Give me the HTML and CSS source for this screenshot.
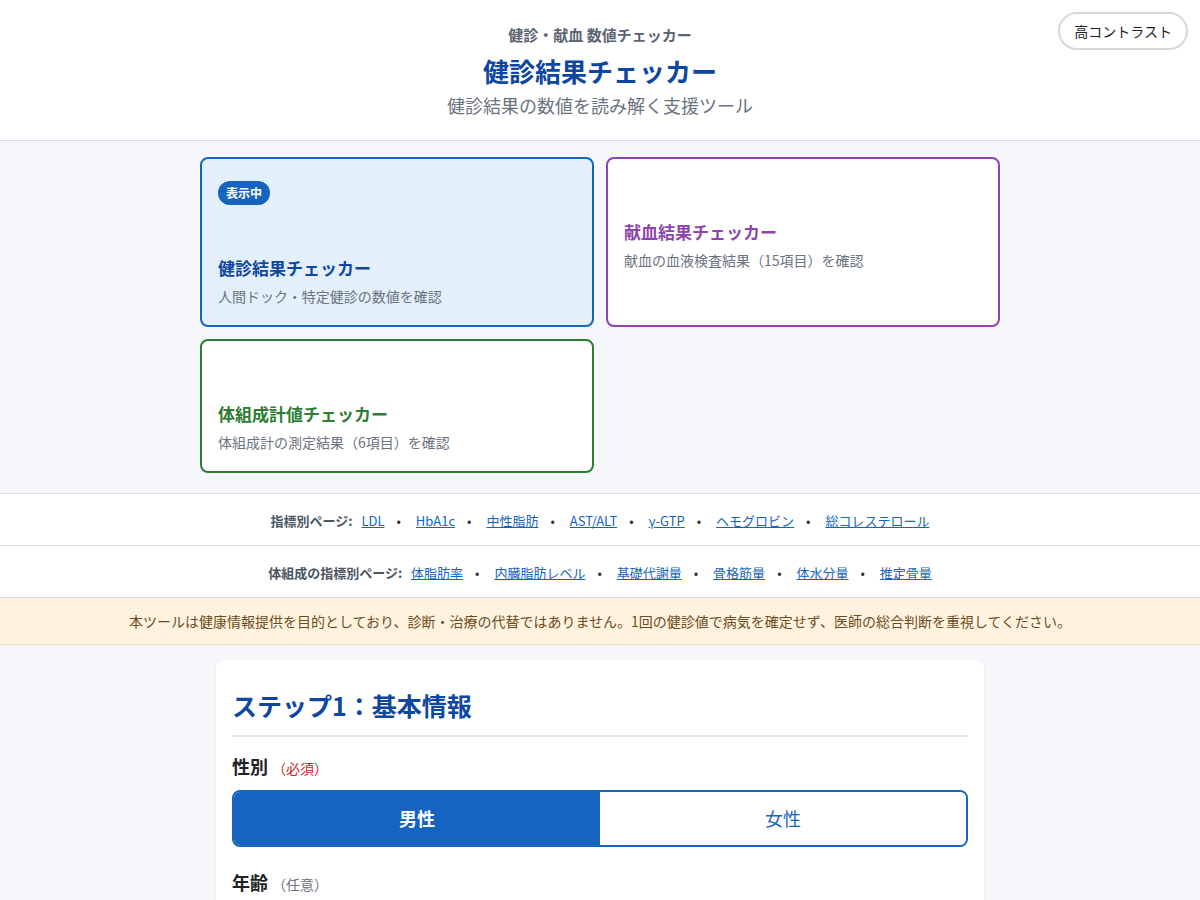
FILE: index.html
```html
<!DOCTYPE html>
<html lang="ja">
  <head>
    <meta charset="UTF-8" />
    <meta name="viewport" content="width=device-width, initial-scale=1.0" />
    <title>健診結果チェッカー</title>
    <link rel="stylesheet" href="styles.css">
  </head>
  <body>
    <header class="site-header">
      <div class="site-name">健診・献血 数値チェッカー</div>
      <h1>健診結果チェッカー</h1>
      <p class="tagline">健診結果の数値を読み解く支援ツール</p>
      <button class="contrast-btn">高コントラスト</button>
    </header>

    <section class="tools">
      <div class="tool-grid">
        <a href="#" class="tool-card current">
          <span class="badge">表示中</span>
          <span class="tool-icon"></span>
          <span class="tool-title">健診結果チェッカー</span>
          <span class="tool-desc">人間ドック・特定健診の数値を確認</span>
        </a>
        <a href="#" class="tool-card blood">
          <span class="tool-icon"></span>
          <span class="tool-title">献血結果チェッカー</span>
          <span class="tool-desc">献血の血液検査結果（15項目）を確認</span>
        </a>
        <a href="#" class="tool-card body">
          <span class="tool-icon"></span>
          <span class="tool-title">体組成計値チェッカー</span>
          <span class="tool-desc">体組成計の測定結果（6項目）を確認</span>
        </a>
      </div>
    </section>

    <nav class="index-nav">
      <span class="nav-label">指標別ページ:</span>
      <a href="#">LDL</a><span class="dot">•</span>
      <a href="#">HbA1c</a><span class="dot">•</span>
      <a href="#">中性脂肪</a><span class="dot">•</span>
      <a href="#">AST/ALT</a><span class="dot">•</span>
      <a href="#">γ-GTP</a><span class="dot">•</span>
      <a href="#">ヘモグロビン</a><span class="dot">•</span>
      <a href="#">総コレステロール</a>
    </nav>
    <nav class="index-nav second">
      <span class="nav-label">体組成の指標別ページ:</span>
      <a href="#">体脂肪率</a><span class="dot">•</span>
      <a href="#">内臓脂肪レベル</a><span class="dot">•</span>
      <a href="#">基礎代謝量</a><span class="dot">•</span>
      <a href="#">骨格筋量</a><span class="dot">•</span>
      <a href="#">体水分量</a><span class="dot">•</span>
      <a href="#">推定骨量</a>
    </nav>

    <div class="disclaimer">
      本ツールは健康情報提供を目的としており、診断・治療の代替ではありません。1回の健診値で病気を確定せず、医師の総合判断を重視してください。
    </div>

    <main class="step-card">
      <h2>ステップ1：基本情報</h2>
      <div class="field">
        <div class="field-label">性別<span class="req">（必須）</span></div>
        <div class="toggle">
          <button class="active">男性</button>
          <button>女性</button>
        </div>
      </div>
      <div class="field">
        <div class="field-label">年齢<span class="opt">（任意）</span></div>
      </div>
    </main>
  </body>
</html>
```

FILE: styles.css
```css
body {
  font-family: "Noto Sans CJK JP", "Noto Sans", sans-serif;
  background-color: #f5f7fa;
  color: #222;
  margin: 0;
  padding: 0;
}

.site-header {
  position: relative;
  background-color: #fff;
  text-align: center;
  padding: 24px 16px 21px;
  border-bottom: 1px solid #d6dbe1;
}

.site-name {
  font-size: 15px;
  font-weight: bold;
  color: #5a6472;
  line-height: 22px;
}

.site-header h1 {
  margin: 7px 0 0;
  font-size: 26px;
  line-height: 36px;
  color: #0d47a1;
}

.tagline {
  margin: 3px 0 0;
  font-size: 18px;
  line-height: 27px;
  color: #6b7280;
}

.contrast-btn {
  position: absolute;
  top: 12px;
  right: 12px;
  font-family: inherit;
  font-size: 14px;
  color: #222;
  background: #fff;
  border: 2px solid #d5d8dd;
  border-radius: 20px;
  padding: 7px 14px;
  cursor: pointer;
}

.tools {
  padding: 16px 0 20px;
}

.tool-grid {
  width: 800px;
  margin: 0 auto;
  display: grid;
  grid-template-columns: 1fr 1fr;
  gap: 12px;
}

.tool-card {
  display: flex;
  flex-direction: column;
  align-items: flex-start;
  padding: 16px 16px 17px;
  background: #fff;
  border: 2px solid #1565c0;
  border-radius: 8px;
  text-decoration: none;
}

.tool-card.current {
  background: #e3effb;
}

.tool-card.blood {
  border-color: #8e44ad;
}

.tool-card.body {
  border-color: #2e7d32;
}

.badge {
  margin-top: 6px;
  background: #1565c0;
  color: #fff;
  font-size: 12px;
  font-weight: bold;
  line-height: 24px;
  padding: 0 8px;
  border-radius: 12px;
}

.tool-icon {
  display: block;
  height: 38px;
  margin-bottom: 8px;
}

.current .tool-icon {
  margin-top: 6px;
}

.tool-title {
  font-size: 17px;
  font-weight: bold;
  line-height: 22px;
  color: #0d47a1;
}

.blood .tool-title {
  color: #8e44ad;
}

.body .tool-title {
  color: #2e7d32;
}

.tool-desc {
  margin-top: 6px;
  font-size: 14px;
  line-height: 23px;
  color: #6b7280;
}

.index-nav {
  background: #fff;
  border-top: 1px solid #d6dbe1;
  border-bottom: 1px solid #d6dbe1;
  text-align: center;
  font-size: 13px;
  line-height: 20px;
  padding: 17px 16px 14px;
}

.index-nav.second {
  border-top: none;
}

.nav-label {
  font-weight: bold;
  color: #4b5563;
  margin-right: 6px;
}

.index-nav a {
  color: #1565c0;
}

.dot {
  color: #333;
  margin: 0 12px;
}

.disclaimer {
  background: #fff3e0;
  border-bottom: 1px solid #eadfcf;
  color: #6d4c1b;
  text-align: center;
  font-size: 14px;
  line-height: 20px;
  padding: 13px 16px;
}

.step-card {
  width: 736px;
  margin: 15px auto 0;
  background: #fff;
  border-radius: 8px;
  box-shadow: 0 1px 4px rgba(0, 0, 0, 0.06);
  padding: 27px 16px 16px;
}

.step-card h2 {
  margin: 0;
  font-size: 25px;
  line-height: 36px;
  color: #0d47a1;
  padding-bottom: 12px;
  border-bottom: 2px solid #e5e7eb;
}

.field {
  margin-top: 16px;
}

.field + .field {
  margin-top: 22px;
}

.field-label {
  font-size: 18px;
  font-weight: bold;
  line-height: 27px;
  color: #222;
}

.req,
.opt {
  font-size: 14px;
  font-weight: normal;
  margin-left: 4px;
}

.req {
  color: #c62828;
}

.opt {
  color: #6b7280;
}

.toggle {
  margin-top: 8px;
  display: flex;
  border: 2px solid #1565c0;
  border-radius: 8px;
  overflow: hidden;
}

.toggle button {
  flex: 1;
  font-family: inherit;
  font-size: 18px;
  line-height: 27px;
  padding: 13px;
  background: #fff;
  color: #1565c0;
  border: none;
  cursor: pointer;
}

.toggle button.active {
  background: #1565c0;
  color: #fff;
  font-weight: bold;
}
```
